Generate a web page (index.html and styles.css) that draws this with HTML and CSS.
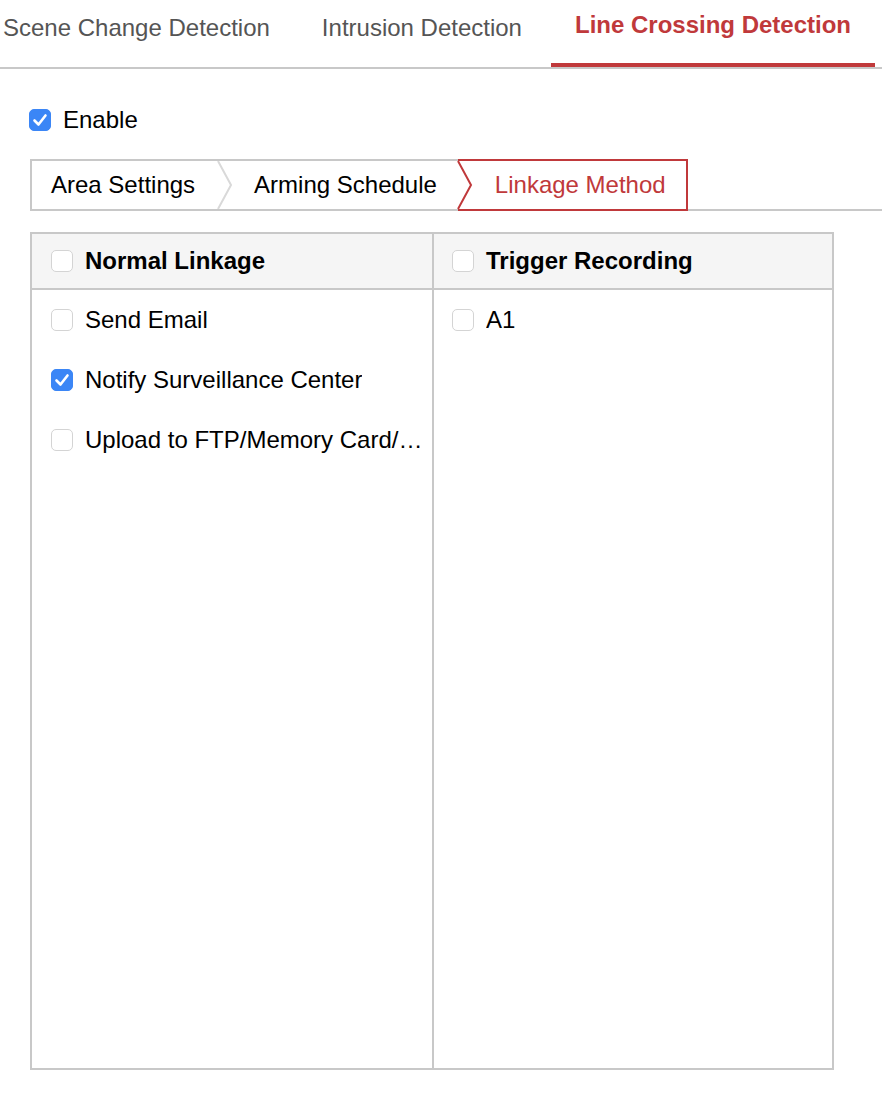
FILE: index.html
```html
<!DOCTYPE html>
<html lang="en">

<head>
    <meta charset="UTF-8">
    <meta name="viewport" content="width=device-width, initial-scale=1.0">
    <link rel="stylesheet" href="styles.css">
</head>

<body>

    <div id="tabs">
        <div class="tab first">Scene Change Detection</div>
        <div class="tab">Intrusion Detection</div>
        <div class="tab active">Line Crossing Detection</div>
    </div>

    <div id="content">
        <label class="check-row enable">
            <span class="box checked">
                <svg viewBox="0 0 22 22" width="22" height="22"><polyline points="5.5,11.5 9.5,15.5 16.5,6.5" fill="none" stroke="#fff" stroke-width="2.6" stroke-linecap="round" stroke-linejoin="round"/></svg>
            </span>
            <span class="label">Enable</span>
        </label>

        <div id="steps">
            <div class="step first">
                <span class="step-text">Area Settings</span>
                <svg class="chevron" viewBox="0 0 16 48" width="16" height="48"><polyline points="1,0 14,24 1,48" fill="none" stroke="#d9d9d9" stroke-width="2"/></svg>
            </div>
            <div class="step second">
                <span class="step-text">Arming Schedule</span>
            </div>
            <div class="step active">
                <svg class="chevron" viewBox="0 0 16 48" width="16" height="48"><polyline points="1,0 14,24 1,48" fill="none" stroke="#c0393b" stroke-width="2"/></svg>
                <span class="step-text">Linkage Method</span>
            </div>
            <div class="step-fill"></div>
        </div>

        <div id="linkage">
            <div class="column">
                <div class="col-head check-row">
                    <span class="box"></span>
                    <span class="label">Normal Linkage</span>
                </div>
                <div class="col-body">
                    <div class="check-row item">
                        <span class="box"></span>
                        <span class="label">Send Email</span>
                    </div>
                    <div class="check-row item">
                        <span class="box checked">
                            <svg viewBox="0 0 22 22" width="22" height="22"><polyline points="5.5,11.5 9.5,15.5 16.5,6.5" fill="none" stroke="#fff" stroke-width="2.6" stroke-linecap="round" stroke-linejoin="round"/></svg>
                        </span>
                        <span class="label">Notify Surveillance Center</span>
                    </div>
                    <div class="check-row item">
                        <span class="box"></span>
                        <span class="label">Upload to FTP/Memory Card/NAS</span>
                    </div>
                </div>
            </div>
            <div class="column right">
                <div class="col-head check-row">
                    <span class="box"></span>
                    <span class="label">Trigger Recording</span>
                </div>
                <div class="col-body">
                    <div class="check-row item">
                        <span class="box"></span>
                        <span class="label">A1</span>
                    </div>
                </div>
            </div>
        </div>
    </div>

</body>

</html>
```

FILE: styles.css
```css
* {
    margin: 0;
    padding: 0;
    box-sizing: border-box;
}

body {
    margin: 0;
    font-family: "Liberation Sans", Arial, sans-serif;
    color: #000;
    background: #fff;
    overflow: hidden;
}

#tabs {
    display: flex;
    gap: 2px;
    height: 69px;
    border-bottom: 2px solid #c8c8c8;
    font-size: 24px;
    color: #555;
}

.tab {
    padding: 10px 25px 0;
    line-height: 36px;
    white-space: nowrap;
}

.tab.first {
    margin-left: -22px;
}

.tab.active {
    margin-left: 2px;
    padding: 7px 24px 0;
    font-weight: bold;
    color: #c0393b;
    border-bottom: 4px solid #c0393b;
}

#content {
    padding-left: 30px;
}

.check-row {
    display: flex;
    align-items: center;
    gap: 12px;
    font-size: 24px;
    line-height: 28px;
}

.box {
    flex: none;
    width: 22px;
    height: 22px;
    border: 1px solid #d4d4d4;
    border-radius: 5px;
    background: #fff;
    position: relative;
}

.box.checked {
    background: #3b86f6;
    border-color: #3b86f6;
}

.box svg {
    position: absolute;
    left: -1px;
    top: -1px;
}

.enable {
    margin-top: 37px;
    margin-left: -1px;
}

#steps {
    display: flex;
    margin-top: 25px;
    height: 52px;
    font-size: 24px;
}

.step {
    display: flex;
    align-items: center;
    border-top: 2px solid #c8c8c8;
    border-bottom: 2px solid #c8c8c8;
    white-space: nowrap;
}

.step.first {
    border-left: 2px solid #c8c8c8;
    padding-left: 19px;
}

.step.first .chevron {
    margin-left: 22px;
    margin-right: 21px;
}

.step.second {
    padding-right: 21px;
}

.step.active {
    border: 2px solid #c0393b;
    border-left: none;
    color: #c0393b;
    padding-right: 20px;
}

.step.active .chevron {
    margin-left: -1px;
    margin-right: 22px;
}

.step-fill {
    flex: 1;
    border-bottom: 2px solid #c8c8c8;
}

#linkage {
    display: grid;
    grid-template-columns: 1fr 1fr;
    width: 804px;
    height: 838px;
    margin-top: 21px;
    border: 2px solid #c8c8c8;
}

.column {
    min-width: 0;
}

.column.right {
    border-left: 2px solid #c8c8c8;
}

.col-head {
    height: 56px;
    padding-left: 19px;
    background: #f5f5f5;
    border-bottom: 2px solid #c8c8c8;
    font-weight: bold;
}

.column.right .col-head,
.column.right .item {
    padding-left: 18px;
}

.item {
    height: 60px;
    padding: 0 4px 0 19px;
}

.item .label {
    overflow: hidden;
    text-overflow: ellipsis;
    white-space: nowrap;
}
```
